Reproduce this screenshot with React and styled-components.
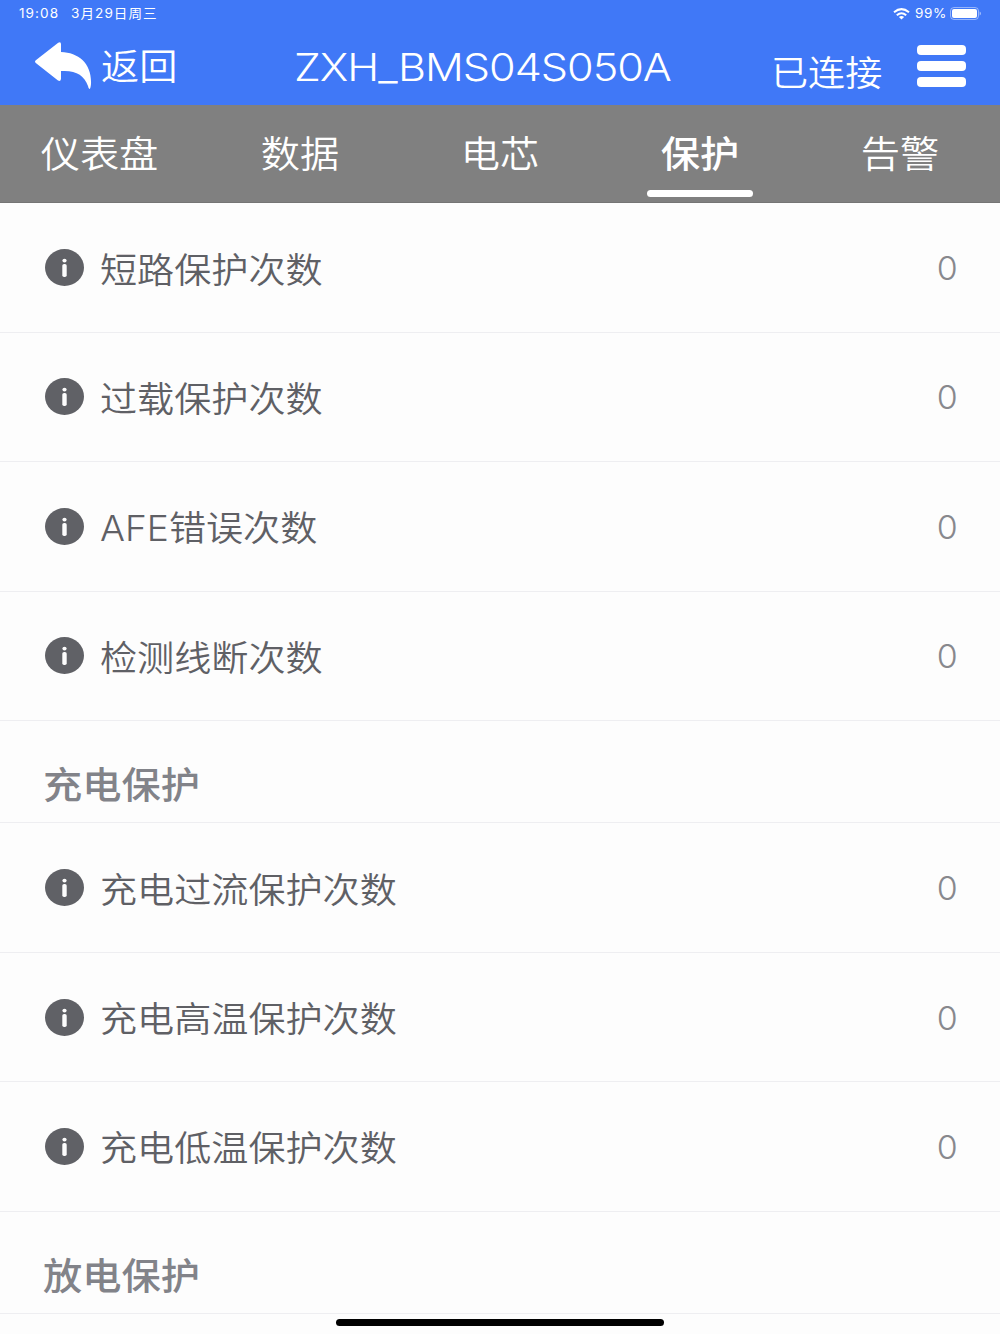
import React from 'react';
import styled, { createGlobalStyle } from 'styled-components';

const GlobalStyle = createGlobalStyle`
  body {
    margin: 0;
    background: #fdfdfd;
    font-family: Inter, "Noto Sans CJK SC", sans-serif;
    overflow: hidden;
  }
`

const Screen = styled.div`
  position: relative;
  width: 1000px;
  height: 1334px;
  overflow: hidden;
  background: #fdfdfd;
`

const Header = styled.header`
  display: flex;
  flex-direction: column;
  height: 105.4px;
  background: #4078f7;
  color: #fff;
`

const StatusBar = styled.div`
  display: flex;
  align-items: center;
  justify-content: space-between;
  height: 27px;
  padding: 0 19px 0 19px;
  font-size: 12.8px;
  line-height: 27px;
`

const StatusGroup = styled.div`
  display: flex;
  align-items: center;
  gap: ${props => props.$gap}px;
  letter-spacing: ${props => props.$spacing}px;
`

// glyphs are a little wider than the font's own, hence the horizontal scale
const Text = styled.span`
  display: inline-block;
  white-space: nowrap;
  transform: scaleX(${props => props.$stretch || 1.06});
  transform-origin: ${props => props.$origin || 'left'} center;
`

const NavBar = styled.div`
  display: grid;
  grid-template-columns: 294px 477px 146px 1fr;
  height: 78px;
  font-weight: 350;
`

const BackButton = styled.div`
  display: flex;
  align-items: flex-start;
  gap: 9px;
  padding: 15px 0 0 35px;
`

const BackLabel = styled.div`
  font-size: 36px;
  line-height: 51px;
`

const Title = styled.div`
  font-size: 38.5px;
  font-weight: 300;
  letter-spacing: -0.9px;
  line-height: 80px;
`

const Connection = styled.div`
  padding-top: 6px;
  font-size: 35px;
  line-height: 80px;
`

const MenuButton = styled.div`
  display: flex;
  flex-direction: column;
  gap: 6px;
  padding-top: 18px;
`

const MenuLine = styled.div`
  width: 49px;
  height: 10px;
  border-radius: 4px;
  background: #fff;
`

const Tabs = styled.nav`
  display: grid;
  grid-template-columns: repeat(5, 1fr);
  height: 98px;
  box-sizing: border-box;
  border-bottom: 1px solid #757575;
  background: #808080;
`

const Tab = styled.div`
  display: flex;
  flex-direction: column;
  align-items: center;
  height: 92px;
  color: #fff;
  font-size: 37px;
  font-weight: ${props => (props.$active ? 500 : 350)};
`

const TabLabel = styled.div`
  height: 85px;
  margin-right: 1px;
  line-height: 100px;
`

const Underline = styled.div`
  width: 106px;
  height: 7px;
  border-radius: 3.5px;
  background: #fff;
`

const Row = styled.div`
  display: flex;
  align-items: center;
  box-sizing: border-box;
  height: 129.4px;
  padding: 0 42px 0 44.5px;
  border-bottom: 1px solid #eeeef1;
`

const Label = styled.div`
  flex: 1;
  margin-left: 16px;
  padding-top: 4px;
  color: #5f6065;
  font-size: 35px;
  font-weight: 350;
  line-height: 50px;
`

const Value = styled.div`
  padding-top: 2px;
  color: #88888d;
  font-size: 32px;
  font-weight: 300;
`

const SectionTitle = styled.div`
  box-sizing: border-box;
  height: 102.5px;
  padding: 29px 0 0 43px;
  border-bottom: 1px solid #eeeef1;
  color: #828389;
  font-size: 37px;
  font-weight: 500;
  line-height: 72px;
`

const HomeIndicator = styled.div`
  position: absolute;
  left: 336px;
  bottom: 8px;
  width: 328px;
  height: 7px;
  border-radius: 3.5px;
  background: #000;
`

const BackIcon = () => (
  <svg width="57" height="48" viewBox="0 0 57 48" fill="#fff">
    <path d="M.8 18.2 23.2.8Q26-.8 26 2.3V10C44 10.5 57 22 56 42Q55.5 47 54.5 47Q53.5 47 53 44C49 33 41 28 26 29V36.5Q26 40 23 38.5L.8 21Q-.8 19.5 .8 18.2Z" />
  </svg>
)

const WifiIcon = () => (
  <svg width="17" height="12" viewBox="0 0 17 12" fill="none" stroke="#fff" strokeWidth="2">
    <path d="M1 4.3Q8.5-2 16 4.3M3.8 7.2Q8.5 3.2 13.2 7.2" />
    <path d="M5.9 8.9Q8.5 6.9 11.1 8.9L8.5 11.6Z" fill="#fff" stroke="none" />
  </svg>
)

const BatteryIcon = () => (
  <svg width="31" height="13" viewBox="0 0 31 13">
    <rect x=".5" y=".5" width="28" height="12" rx="3.5" fill="none" stroke="#fff" strokeOpacity=".45" />
    <rect x="2" y="2" width="25" height="9" rx="2" fill="#fff" />
    <path d="M29.6 4.5Q31 5 31 6.5T29.6 8.5Z" fill="#fff" fillOpacity=".5" />
  </svg>
)

const InfoIcon = () => (
  <svg width="39" height="37" viewBox="0 0 39 37">
    <ellipse cx="19.5" cy="18.5" rx="19.5" ry="18.5" fill="#606166" />
    <ellipse cx="19.5" cy="11.6" rx="2.1" ry="1.9" fill="#fdfdfd" />
    <rect x="17.3" y="15" width="4.4" height="13" rx="1.8" fill="#fdfdfd" />
  </svg>
)

const tabs = ['仪表盘', '数据', '电芯', '保护', '告警'];

const sections = [
  { items: ['短路保护次数', '过载保护次数', 'AFE错误次数', '检测线断次数'] },
  { title: '充电保护', items: ['充电过流保护次数', '充电高温保护次数', '充电低温保护次数'] },
  { title: '放电保护', items: [] },
];

class App extends React.Component {
  constructor(props) {
    super(props);
    this.state = { active: '保护' }
  }

  render() {
    return (
      <Screen>
        <GlobalStyle />
        <Header>
          <StatusBar>
            <StatusGroup $gap={14.5} $spacing={1}>
              <Text>19:08</Text>
              <Text>3月29日周三</Text>
            </StatusGroup>
            <StatusGroup $gap={5} $spacing={0.6}>
              <WifiIcon />
              <Text>99%</Text>
              <BatteryIcon />
            </StatusGroup>
          </StatusBar>
          <NavBar>
            <BackButton><BackIcon /><BackLabel><Text>返回</Text></BackLabel></BackButton>
            <Title><Text $stretch={1.12}>ZXH_BMS04S050A</Text></Title>
            <Connection><Text>已连接</Text></Connection>
            <MenuButton><MenuLine /><MenuLine /><MenuLine /></MenuButton>
          </NavBar>
        </Header>
        <Tabs>
          {tabs.map(tab => (
            <Tab key={tab} $active={tab === this.state.active} onClick={() => this.setState({ active: tab })}>
              <TabLabel><Text $origin="center">{tab}</Text></TabLabel>
              {tab === this.state.active && <Underline />}
            </Tab>
          ))}
        </Tabs>
        {sections.map((section, i) => (
          <div key={i}>
            {section.title && <SectionTitle><Text>{section.title}</Text></SectionTitle>}
            {section.items.map(item => (
              <Row key={item}>
                <InfoIcon />
                <Label><Text>{item}</Text></Label>
                <Value><Text $origin="right">0</Text></Value>
              </Row>
            ))}
          </div>
        ))}
        <HomeIndicator />
      </Screen>
    )
  }
};

export default App;
